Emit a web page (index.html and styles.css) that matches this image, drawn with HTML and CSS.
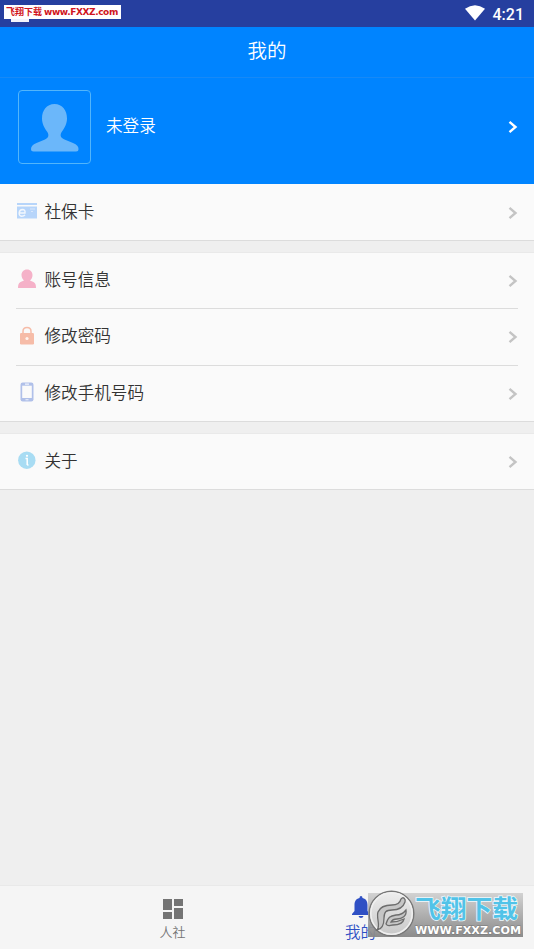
FILE: index.html
```html
<!DOCTYPE html>
<html lang="zh-CN">
<head>
<meta charset="utf-8">
<title>我的</title>
<link rel="stylesheet" href="styles.css">
</head>
<body>
<div class="app">
  <div class="status">
    <span class="notice"></span>
    <div class="source"><span class="source-cn">飞翔下载</span><span class="source-url">www.FXXZ.com</span></div>
    <svg class="wifi" width="20" height="16" viewBox="0 0 20 16"><path d="M0 3.8Q10-3.2 20 3.8L10 15.6Z" fill="#fff"/></svg>
    <span class="clock">4:21</span>
  </div>
  <header class="title">我的</header>
  <section class="profile">
    <div class="avatar">
      <svg width="71" height="72" viewBox="0 0 71 72"><path d="M35.5 13C27.5 13 23 19.500 23 27.500C23 33 25.500 37 28 40.500C30.500 44 29.500 47 26 48.500L17.500 52C13.500 53.500 12 55.500 12 58Q12 60.500 14.500 60.500H57Q59.500 60.500 59.500 58C59.500 55.500 58 53.500 54 52L45.500 48.500C41.500 47 40.500 44 43 40.500C45.500 37 48 33 48 27.500C48 19.500 43.500 13 35.500 13Z" fill="#6bb7fa"/></svg>
    </div>
    <span class="name">未登录</span>
    <svg class="chev chev-light" width="10" height="14" viewBox="0 0 10 14"><path d="M1.500 1.800L7.500 7L1.500 12.200"/></svg>
  </section>
  <main>
    <div class="group">
      <div class="row">
        <svg class="icon" width="22" height="20" viewBox="0 0 22 20"><path d="M1 2H21V4H1ZM1 5.500H21V17.500H1Z" fill="#b7d5fa"/><path d="M3 12H9Q9.500 8.500 6.500 8.500C2.500 8.700 2 15 5.500 15.200Q8 15.200 9 13.800" fill="none" stroke="#f4f8fd" stroke-width="1.400"/><path d="M14 8H19M15 10.500H17" stroke="#d9e8fc" stroke-width="1.200"/></svg>
        <span class="label">社保卡</span>
        <svg class="chev" width="10" height="14" viewBox="0 0 10 14"><path d="M1.500 1.800L7.500 7L1.500 12.200"/></svg>
      </div>
    </div>
    <div class="group">
      <div class="row">
        <svg class="icon" width="22" height="20" viewBox="0 0 22 20"><path d="M11 .5C7.500 .5 5.500 3 5.500 6C5.500 8.500 6.700 10.300 8 11.500L4.500 13C2.500 14 2 16 2 19H20C20 16 19.500 14 17.500 13L14 11.500C15.500 10.300 16.500 8.500 16.500 6C16.500 3 14.500 .5 11 .5Z" fill="#f5b1c8"/></svg>
        <span class="label">账号信息</span>
        <svg class="chev" width="10" height="14" viewBox="0 0 10 14"><path d="M1.500 1.800L7.500 7L1.500 12.200"/></svg>
      </div>
      <div class="row">
        <svg class="icon" width="22" height="20" viewBox="0 0 22 20"><path d="M7 8V5.500Q7 1.600 11 1.600T15 5.500V8" fill="none" stroke="#f6bca8" stroke-width="1.500"/><rect x="4" y="7" width="14" height="11.500" rx="1.200" fill="#f6bca8"/><circle cx="11" cy="12.500" r="1.600" fill="#fff4ef"/></svg>
        <span class="label">修改密码</span>
        <svg class="chev" width="10" height="14" viewBox="0 0 10 14"><path d="M1.500 1.800L7.500 7L1.500 12.200"/></svg>
      </div>
      <div class="row">
        <svg class="icon" width="22" height="20" viewBox="0 0 22 20"><rect x="4.500" y=".5" width="13" height="19" rx="2.200" fill="#b0c0e9"/><path d="M6.200 3.700H15.800V16H6.200Z" fill="#fafafa"/><path d="M9 2.100H13M9.500 17.800H12.500" stroke="#f0f4fd" stroke-width="1.100"/></svg>
        <span class="label">修改手机号码</span>
        <svg class="chev" width="10" height="14" viewBox="0 0 10 14"><path d="M1.500 1.800L7.500 7L1.500 12.200"/></svg>
      </div>
    </div>
    <div class="group">
      <div class="row">
        <svg class="icon" width="22" height="20" viewBox="0 0 22 20"><circle cx="10.800" cy="10.200" r="8.700" fill="#a8dcf3"/><path d="M9.500 8.500H11.200V15M11.200 15H12.500" fill="none" stroke="#fff" stroke-width="1.500"/><circle cx="11" cy="5.800" r="1.100" fill="#fff"/></svg>
        <span class="label">关于</span>
        <svg class="chev" width="10" height="14" viewBox="0 0 10 14"><path d="M1.500 1.800L7.500 7L1.500 12.200"/></svg>
      </div>
    </div>
  </main>
  <nav class="tabs">
    <div class="tab">
      <svg width="22" height="22" viewBox="0 0 22 22"><path d="M1 1H10V12H1ZM12 1H21V8H12ZM1 14H10V21H1ZM12 10H21V21H12Z" fill="#747474"/></svg>
      <span>人社</span>
    </div>
    <div class="tab tab-active">
      <svg width="22" height="22" viewBox="0 0 22 22"><path d="M11 0Q12.500 0 12.500 2C16.500 3 17.500 6 17.500 9V15L20 18V19H2V18L4.500 15V9C4.500 6 5.500 3 9.500 2Q9.500 0 11 0ZM8.500 20H13.500Q13 22 11 22T8.500 20Z" fill="#2f50c4"/></svg>
      <span>我的</span>
    </div>
  </nav>
  <div class="mark">
    <svg width="158" height="48" viewBox="0 0 158 48">
      <defs>
        <linearGradient id="plate" x2="0" y2="1"><stop offset="0" stop-color="#d0d0d0"/><stop offset="1" stop-color="#858585"/></linearGradient>
        <linearGradient id="disc" x2="0" y2="1"><stop offset="0" stop-color="#eeeeee"/><stop offset="1" stop-color="#c8c8c8"/></linearGradient>
      </defs>
      <rect x="2" y="3" width="155" height="44" fill="url(#plate)" opacity=".94"/>
      <circle cx="25.500" cy="23.500" r="22.300" fill="url(#disc)" stroke="#777" stroke-width="1.400"/>
      <circle cx="25.500" cy="23.500" r="20.700" fill="none" stroke="#f0f0f0" stroke-width="1.500"/>
      <path d="M11 40C15 36 10 28 12 22C14 17 20 15 26 15C31 15 34 13 35 9C37 6 40 9 39 12C37 18 31 20 26 20C20 20 18 22 18 28C18 34 17 39 11 40ZM20 34C22 27 24 26 30 25C34 25 37 24 40 20C41 26 36 29 31 29C28 29 26 30 25 32C29 32 34 31 38 29C37 34 31 35 27 35C24 35 22 37 20 34Z" fill="#c6c6c6" stroke="#6d6d6d" stroke-width="1.300"/>
      <text class="mark-cn" x="49" y="28" textLength="103" lengthAdjust="spacingAndGlyphs">飞翔下载</text>
      <text class="mark-url" x="49" y="43.500" textLength="106" lengthAdjust="spacingAndGlyphs">WWW.FXXZ.COM</text>
    </svg>
  </div>
</div>
</body>
</html>
```
FILE: styles.css
```css
* { box-sizing: border-box; }
body {
  margin: 0;
  font-family: "Noto Sans CJK SC", sans-serif;
  font-weight: 400;
  color: #333;
}
svg { display: block; flex: none; }
.app {
  position: relative;
  display: flex;
  flex-direction: column;
  width: 534px;
  height: 949px;
  overflow: hidden;
  background: #efefef;
}
.status {
  position: relative;
  flex: none;
  display: flex;
  align-items: center;
  justify-content: flex-end;
  height: 27px;
  padding-right: 10px;
  background: #263f9f;
  color: #fff;
}
.source {
  position: absolute;
  left: 4px;
  top: 5px;
  display: flex;
  align-items: center;
  width: 117px;
  height: 14px;
  padding-left: 2px;
  background: #fff;
  color: #d01420;
  white-space: nowrap;
}
.source-cn { flex: none; width: 38px; font-size: 9px; font-weight: 700; line-height: 14px; }
.source-url { font: 700 9px/14px "DejaVu Sans", sans-serif; letter-spacing: -.4px; }
.notice {
  position: absolute;
  left: 11px;
  top: 17px;
  width: 18px;
  height: 5px;
  background: #f3f5fc;
}
.wifi { margin: 0 8px 2px 0; }
.clock { font: 500 16px/27px Roboto, sans-serif; padding-top: 2px; }
.title {
  flex: none;
  height: 51px;
  border-bottom: 1px solid #1789f6;
  background: #0084ff;
  color: #fff;
  font-size: 19.500px;
  font-weight: 350;
  line-height: 45px;
  text-align: center;
}
.profile {
  flex: none;
  display: flex;
  align-items: center;
  height: 106px;
  padding: 0 16px 8px 18px;
  background: #0084ff;
  color: #fff;
}
.avatar {
  width: 73px;
  height: 74px;
  margin-top: -1px;
  border: 1px solid #52b5fb;
  border-radius: 4px;
}
.name {
  flex: 1;
  margin: -4px 0 0 15px;
  font-size: 16.600px;
  font-weight: 350;
  line-height: 24px;
}
.chev path { fill: none; stroke: #c4c4c4; stroke-width: 2.400; }
.chev-light path { stroke: #fff; }
main { flex: 1; }
.group {
  margin-bottom: 11px;
  border-bottom: 1px solid #dcdcdc;
  background: #fafafa;
}
.group + .group { border-top: 1px solid #e9e9e9; }
.row {
  position: relative;
  display: flex;
  align-items: center;
  height: 56px;
  padding: 0 16px;
}
.group + .group .row:first-child { height: 55px; }
.row:nth-child(2) { height: 57px; }
.row + .row::before {
  content: "";
  position: absolute;
  left: 16px;
  right: 16px;
  top: 0;
  height: 1px;
  background: #dcdcdc;
}
.icon { margin-top: -2px; }
.label {
  flex: 1;
  margin: -2px 0 0 6.500px;
  font-size: 16.600px;
  font-weight: 350;
  line-height: 24px;
}
.group + .group .row:first-child .icon,
.group + .group .row:first-child .label,
.row:nth-child(2) .label { margin-top: -4px; }
.row .chev { margin-top: 1px; }
.tabs {
  flex: none;
  display: flex;
  justify-content: center;
  height: 64px;
  padding: 12px 1px 0 0;
  border-top: 1px solid #e9e9e9;
  background: #f5f5f5;
}
.tab {
  display: flex;
  flex-direction: column;
  align-items: center;
  width: 188px;
  color: #747474;
  font-size: 13px;
  font-weight: 350;
  line-height: 24px;
}
.tab-active { color: #2f50c4; font-size: 15.500px; }
.tab-active svg { margin-top: -2px; }
.tab-active span { margin-top: 1px; }
.mark { position: absolute; left: 366px; top: 890px; }
.mark-cn {
  font: 700 25px "Noto Sans CJK SC", sans-serif;
  fill: #51c3e8;
  stroke: #eefaff;
  stroke-width: 1.500px;
  paint-order: stroke;
}
.mark-url {
  font: 700 10px "DejaVu Sans", sans-serif;
  fill: #fff;
  stroke: #777;
  stroke-width: .8px;
  paint-order: stroke;
}
```
